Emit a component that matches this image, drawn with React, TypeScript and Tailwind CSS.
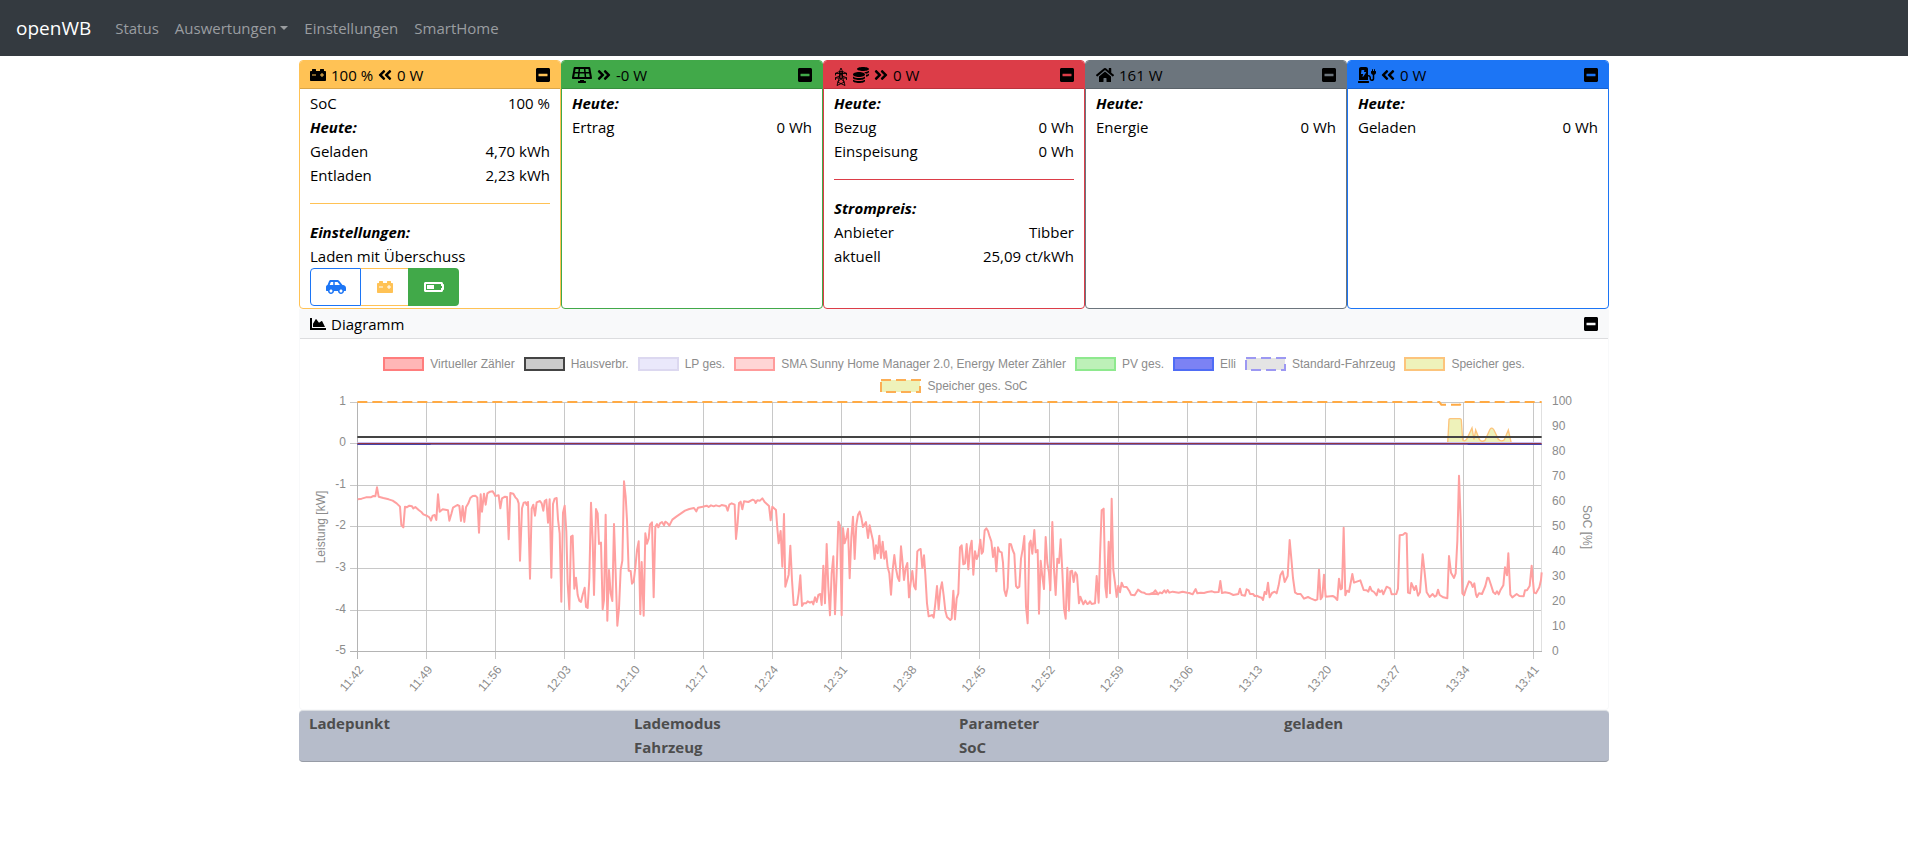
import type { ReactNode } from "react";
import {
  FaAngleDoubleLeft,
  FaAngleDoubleRight,
  FaBatteryHalf,
  FaCarBattery,
  FaCarSide,
  FaChargingStation,
  FaChartArea,
  FaCoins,
  FaHome,
  FaMinusSquare,
  FaSolarPanel,
} from "react-icons/fa";

const FONT = "font-['Segoe_UI','Open_Sans',sans-serif]";

function PylonIcon() {
  return (
    <svg width="14" height="22" viewBox="0 0 14 22" fill="none" stroke="currentColor" strokeWidth="0.9" aria-hidden="true">
      <path d="M5.5 7.500 7 4l1.500 3.500M1 9.500 5.500 7.500h3L13 9.500H1M1.500 9.500v2M12.500 9.500v2M5.500 7.500l3 4.500M8.500 7.500l-3 4.500" />
      <path d="M1 14 5.500 12h3L13 14H1M1.500 14v2M12.500 14v2M5.500 7.500V13L3 21.500M8.500 7.500V13L11 21.500M5.500 13.500l5 4.500M8.500 13.500l-5 4.500M3.500 18l7.500 3.500M10.500 18 3 21.500" />
    </svg>
  );
}

type CardProps = {
  title: ReactNode;
  border: string;
  fill: string;
  children: ReactNode;
};

function Card({ title, border, fill, children }: CardProps) {
  return (
    <section className={`flex min-w-0 flex-1 flex-col overflow-hidden rounded border ${border}`}>
      <header className={`flex h-7 items-center border-b border-black/15 px-2.5 ${fill}`}>
        <h2 className="flex items-center gap-[5px]">{title}</h2>
        <button type="button" aria-label="Einklappen" className="ml-auto">
          <FaMinusSquare className="h-4 w-3.5" />
        </button>
      </header>
      <div className="flex-1 px-2.5 pt-0.5 pb-0.5">{children}</div>
    </section>
  );
}

function Row({ label, value }: { label: string; value: string }) {
  return (
    <div className="flex justify-between">
      <span>{label}</span>
      <span>{value}</span>
    </div>
  );
}

function Heading({ children }: { children: ReactNode }) {
  return <h3 className="font-bold italic">{children}</h3>;
}

const NAV = ["Status", "Auswertungen", "Einstellungen", "SmartHome"];

const LEGEND = [
  { label: "Virtueller Zähler", stroke: "#ff7d7d", fill: "#ffb6b6" },
  { label: "Hausverbr.", stroke: "#444444", fill: "#cccccc" },
  { label: "LP ges.", stroke: "#dcd8f0", fill: "#eae8fb" },
  { label: "SMA Sunny Home Manager 2.0, Energy Meter Zähler", stroke: "#ff9b9b", fill: "#ffd5d5" },
  { label: "PV ges.", stroke: "#8ee98e", fill: "#bdf0b8" },
  { label: "Elli", stroke: "#4f6cf5", fill: "#7c82f4" },
  { label: "Standard-Fahrzeug", stroke: "#9c98f2", fill: "#e4e4e4", dashed: true },
  { label: "Speicher ges.", stroke: "#fcc47c", fill: "#eef2ba" },
  { label: "Speicher ges. SoC", stroke: "#fcae54", fill: "#eef2ba", dashed: true },
];

const TIMES = [
  "11:42", "11:49", "11:56", "12:03", "12:10", "12:17", "12:24", "12:31", "12:38",
  "12:45", "12:52", "12:59", "13:06", "13:13", "13:20", "13:27", "13:34", "13:41",
];

// y of the grid lines, 1 kW down to -5 kW
const GRID_Y = [9.5, 50.5, 92.5, 133.5, 175.5, 217.5, 258.5];

// meter samples, three units per pixel; each run starts at its own x offset
const METER_RUNS = [
  {
    start: 0,
    points:
      "203,478 215,476 228,472 242,472 250,468 256,469 261,442 266,470 280,474 296,478 308,482 320,490 330,500 334,555 340,562 345,500 350,502 358,497 366,499 370,505 376,501 386,510 394,516 400,523 412,528 418,532 423,542 428,527 434,525 439,540 444,463 449,515 458,508 474,511 478,542 484,522 489,503 502,495 508,498 513,543 518,498 523,546 528,502 535,490 541,474 548,468 556,467 562,473 567,578 572,463 576,515 582,461 587,494 592,460 600,455 608,454 612,460 616,468 626,466 631,505 636,475 645,470 651,471 656,598 661,459 670,461 676,472 682,478 686,490 690,662 696,505 701,488 707,487 710,495 714,486 720,716 725,506 730,494 735,527 740,487 750,483 755,490 760,512 764,483 769,479 774,548 779,478 784,713 789,492 794,476 800,474 804,538 809,580 814,785 819,518 824,497 829,575 833,730 838,808 843,590 848,587 853,746 858,713 863,765 868,782 873,786 878,764 884,743 888,801 893,804 898,715 903,488 908,600 912,765 918,507 923,520 927,612 933,608 938,808 942,780 947,524 952,842 957,690 962,760 967,783 972,552 977,700 982,857 987,805 992,690 997,662 1002,424 1007,470 1011,540 1016,692 1022,693 1026,731 1031,725 1036,682 1041,630 1046,604 1051,823 1055,666 1061,827 1066,580 1071,611 1076,595 1080,554 1086,547 1091,772 1096,560 1101,552 1105,562 1110,550 1116,546 1122,556 1126,545 1132,549 1138,557 1147,539 1160,529 1172,521",
  },
  {
    start: 1170,
    points:
      "2,521 15,512 28,507 42,504 49,514 54,503 68,500 80,497 86,501 93,496 101,499 108,496 118,499 125,495 138,498 143,512 148,494 155,490 164,494 168,597 173,548 177,489 182,485 187,508 192,484 205,486 218,479 224,482 227,489 232,481 240,482 247,475 254,486 267,498 272,541 277,500 288,510 292,565 296,610 302,573 307,680 312,522 316,740 326,704 331,617 336,720 341,795 351,794 356,760 361,706 366,798 371,790 378,790 383,784 390,788 396,785 400,793 405,772 410,786 415,765 421,762 425,795 430,677 435,790 440,612 445,740 450,826 455,700 460,649 465,823 470,700 475,545 480,556 485,826 489,564 494,610 499,593 504,566 509,715 514,592 519,530 524,657 529,555 534,524 539,515 544,533 549,561 558,546 564,594 569,556 574,580 579,602 584,657 588,616 593,640 598,587 603,654 608,605 613,656 618,634 623,682 628,700 633,764 638,690 643,645 648,686 653,712 658,723 663,619 667,660 672,720 677,684 682,669 687,772 692,729 697,693 702,738 707,748 712,634 717,629 722,627 727,684 732,646 736,704 741,790 746,829 757,825 761,833 766,790 771,738 776,808 781,750 786,727 791,766 796,812 801,831 811,840 815,836 820,752 825,838 830,775 835,760 840,622 845,616 850,673 855,670 860,612 865,688 870,626 875,602 880,704 885,634 890,657 895,645 901,599 905,641 909,635 914,571 919,565 924,573 929,590 934,604 939,651 944,623 949,694 954,622 959,635 965,637 969,668 973,750 978,768 983,743 988,612 993,613 998,630 1003,642 1008,738 1013,744 1018,740 1023,656 1028,628 1033,588 1038,800 1043,850 1048,610 1052,602 1057,641 1063,570 1067,637 1073,630 1077,821 1082,662 1087,708 1092,747 1097,591 1102,669 1107,698 1111,751 1117,546 1122,688 1127,765 1132,656 1137,669 1142,598 1147,694 1152,806 1157,836 1162,683 1167,812 1171,694 1176,692 1181,726 1186,697 1191,705 1197,790 1201,770 1210,793 1216,782 1222,792 1226,790 1230,784 1235,792 1245,790 1250,708 1256,788 1260,648 1265,511 1271,506 1276,740 1280,772 1286,605 1290,760 1295,476 1300,690 1305,728 1310,771 1315,737 1320,757 1325,728 1330,740 1340,741 1348,753 1353,764 1364,766 1374,749 1385,757 1392,758 1398,762 1408,763 1418,761 1426,751 1434,762",
  },
  {
    start: 2580,
    points:
      "0,762 10,758 16,752 24,763 30,757 36,760 43,751 48,758 53,750 58,758 68,755 86,758 98,755 112,758 118,759 128,763 137,747 142,760 152,758 162,759 172,756 186,754 194,757 206,756 211,723 216,759 225,757 240,760 250,765 265,762 270,746 275,765 285,767 290,748 296,751 300,762 309,762 314,768 320,767 328,771 335,773 339,780 344,756 349,762 354,728 359,772 366,759 374,755 380,760 386,736 391,706 398,694 404,726 413,708 419,600 424,656 429,714 435,757 442,762 452,762 462,776 474,771 482,775 496,781 502,778 507,689 512,778 517,770 522,704 527,770 548,768 554,771 562,780 567,716 572,748 576,745 581,563 586,766 591,752 597,756 607,702 612,728 631,721 641,750 650,751 655,755 660,740 665,752 672,756 680,766 685,748 690,756 696,751 700,763 710,740 720,745 725,763 739,762 744,746 749,586 759,584 765,579 770,581 774,758 780,760 784,729 793,750 798,738 804,767 810,757 818,643 824,698 830,757 839,771 848,762 854,770 859,767 864,749 869,765 880,772 892,775 897,648 903,698 912,714 917,700 922,603 927,407 932,540 937,760 942,766 948,747 957,724 963,728 968,741 973,730 978,764 981,771 987,760 996,762 1006,738 1012,713 1016,714 1023,735 1030,757 1036,762 1041,754 1046,763 1052,749 1060,736 1065,682 1071,706 1075,640 1081,764 1087,772 1100,762 1108,768 1121,769 1125,751 1131,751 1139,738 1145,677 1152,758 1158,760 1168,742 1173,720 1175,697",
  },
];

const METER_POINTS = METER_RUNS.flatMap(({ start, points }) =>
  points.split(" ").map((pair) => {
    const [x, y] = pair.split(",").map(Number);
    return `${start + x},${y}`;
  }),
).join(" ");

function Chart() {
  return (
    <svg viewBox="0 0 1308 316" className="block h-auto w-full font-['Liberation_Sans',Arial,sans-serif] text-[12px]" fill="#8c8c8c">
      <g stroke="#c8c8c8">
        {GRID_Y.map((y) => (
          <line key={y} x1="50" x2="1242" y1={y} y2={y} />
        ))}
        {TIMES.map((t, i) => {
          const x = 57.5 + Math.round(i * 69.15);
          return <line key={t} x1={x} x2={x} y1="9" y2="266" />;
        })}
        <line x1="1241.5" x2="1241.5" y1="9" y2="258" stroke="#e0e0e0" />
        <path d="M57.5 9v257M50 258.500h1192" stroke="#b4b4b4" />
      </g>

      <g transform="translate(-10 -53) scale(0.333333)">
        <path
          d="M3473 310 3477 238Q3478 236 3481 236H3510Q3513 236 3514 240L3518 300Q3522 306 3530 298L3546 264 3552 298 3557 270 3568 298Q3575 308 3585 301L3600 268Q3606 260 3612 270L3625 298Q3634 307 3643 299L3655 270 3664 310Z"
          fill="#eef2ba"
          stroke="#fcc47c"
          strokeWidth="4"
        />
        <path d="M202 291H3755" stroke="#444444" strokeWidth="6" />
        <path d="M202 307.500H3755" stroke="#c6c0f5" strokeWidth="3" />
        <path d="M202 310.500H3755" stroke="#93333f" strokeWidth="3" />
        <path d="M202 313.500H3755" stroke="#7667b4" strokeWidth="3" />
        <path d="M202 313.500H422M3533 313.500H3755" stroke="#4545ac" strokeWidth="3" />
        <path
          d="M202 186H3448L3454 194H3510L3516 186H3755"
          fill="none"
          stroke="#ffaa44"
          strokeWidth="6"
          strokeDasharray="30 15"
        />
        <polyline points={METER_POINTS} fill="none" stroke="#ffa0a0" strokeWidth="6" strokeLinejoin="round" />
      </g>

      <g textAnchor="end">
        {GRID_Y.map((y, i) => (
          <text key={y} x="46" y={y + 2}>
            {1 - i}
          </text>
        ))}
        {TIMES.map((t, i) => (
          <text key={t} transform={`translate(${64 + i * 69.15} 277) rotate(-50)`}>
            {t}
          </text>
        ))}
      </g>
      {Array.from({ length: 11 }, (_, i) => (
        <text key={i} x="1252" y={12 + i * 25}>
          {100 - i * 10}
        </text>
      ))}
      <g textAnchor="middle">
        <text transform="translate(25 134) rotate(-90)">Leistung [kW]</text>
        <text transform="translate(1283 134) rotate(90)">SoC [%]</text>
      </g>
    </svg>
  );
}

export default function App() {
  return (
    <div className={`text-[15px] leading-6 text-black ${FONT}`}>
      <nav className="flex h-14 items-center bg-[#343a40] px-4">
        <a href="#" className="mr-4 text-[19px] text-white">
          openWB
        </a>
        <div className="flex">
          {NAV.map((item) => (
            <a key={item} href="#" className="flex items-center px-2 text-[#9a9da0]">
              {item}
              {item === "Auswertungen" && (
                <span className="ml-1 border-x-4 border-t-4 border-x-transparent border-t-current" />
              )}
            </a>
          ))}
        </div>
      </nav>

      <main className="mx-auto mt-1 max-w-[1310px]">
        <div className="flex">
          <Card
            border="border-[#ffc255]"
            fill="bg-[#ffc255]"
            title={
              <>
                <FaCarBattery size={16} /> 100 % <FaAngleDoubleLeft className="h-4 w-3.5" /> 0 W
              </>
            }
          >
            <Row label="SoC" value="100 %" />
            <Heading>Heute:</Heading>
            <Row label="Geladen" value="4,70 kWh" />
            <Row label="Entladen" value="2,23 kWh" />
            <hr className="my-4 border-[#ffc255]" />
            <Heading>Einstellungen:</Heading>
            <p>Laden mit Überschuss</p>
            <div className="flex">
              <button type="button" aria-label="Fahrzeug" className="flex h-[38px] w-[51px] items-center justify-center rounded-l border border-[#1c75f5] text-[#1c75f5]">
                <FaCarSide size={20} />
              </button>
              <button type="button" aria-label="Speicher" className="flex h-[38px] w-[47px] items-center justify-center border-y border-[#ffc255] text-[#ffc255]">
                <FaCarBattery size={16} />
              </button>
              <button type="button" aria-label="Überschuss" className="flex h-[38px] w-[51px] items-center justify-center rounded-r bg-[#41a949] text-white">
                <FaBatteryHalf size={20} />
              </button>
            </div>
          </Card>

          <Card
            border="border-[#41a949]"
            fill="bg-[#41a949]"
            title={
              <>
                <FaSolarPanel size={20} /> <FaAngleDoubleRight className="h-4 w-3.5" /> -0 W
              </>
            }
          >
            <Heading>Heute:</Heading>
            <Row label="Ertrag" value="0 Wh" />
          </Card>

          <Card
            border="border-[#dc3d48]"
            fill="bg-[#dc3d48]"
            title={
              <>
                <PylonIcon /> <FaCoins size={16} /> <FaAngleDoubleRight className="h-4 w-3.5" /> 0 W
              </>
            }
          >
            <Heading>Heute:</Heading>
            <Row label="Bezug" value="0 Wh" />
            <Row label="Einspeisung" value="0 Wh" />
            <hr className="my-4 border-[#dc3d48]" />
            <Heading>Strompreis:</Heading>
            <Row label="Anbieter" value="Tibber" />
            <Row label="aktuell" value="25,09 ct/kWh" />
          </Card>

          <Card
            border="border-[#6c757d]"
            fill="bg-[#6c757d]"
            title={
              <>
                <FaHome size={18} /> 161 W
              </>
            }
          >
            <Heading>Heute:</Heading>
            <Row label="Energie" value="0 Wh" />
          </Card>

          <Card
            border="border-[#1c75f5]"
            fill="bg-[#1c75f5]"
            title={
              <>
                <FaChargingStation size={18} /> <FaAngleDoubleLeft className="h-4 w-3.5" /> 0 W
              </>
            }
          >
            <Heading>Heute:</Heading>
            <Row label="Geladen" value="0 Wh" />
          </Card>
        </div>

        <section className="rounded-b border border-t-0 border-[#f8f9fa]">
          <header className="flex h-[30px] items-center border-b border-[#dcdddf] bg-[#f8f9fa] px-2.5">
            <h2 className="flex items-center gap-[5px]">
              <FaChartArea size={16} /> Diagramm
            </h2>
            <button type="button" aria-label="Diagramm einklappen" className="ml-auto">
              <FaMinusSquare className="h-4 w-3.5" />
            </button>
          </header>
          <div className="flex flex-wrap justify-center gap-x-[9px] gap-y-2 px-12 pt-[18px] font-['Liberation_Sans',Arial,sans-serif] text-[12px] leading-[14px] text-[#8c8c8c]">
            {LEGEND.map(({ label, stroke, fill, dashed }) => (
              <button key={label} type="button" className="flex items-center gap-1.5">
                <svg width="41" height="14" aria-hidden="true">
                  <rect
                    x="1"
                    y="1"
                    width="39"
                    height="12"
                    fill={fill}
                    stroke={stroke}
                    strokeWidth="2"
                    strokeDasharray={dashed ? "10 5" : undefined}
                  />
                </svg>
                {label}
              </button>
            ))}
          </div>
          <Chart />
        </section>

        <section className="grid grid-cols-4 rounded border-y border-t-[#dcdfe3] border-b-[#979ca6] bg-[#b6bcca] pb-0.5 pl-2.5 font-bold text-[#4d4d4d]">
          <span>Ladepunkt</span>
          <span>Lademodus</span>
          <span>Parameter</span>
          <span>geladen</span>
          <span className="col-start-2">Fahrzeug</span>
          <span>SoC</span>
        </section>
      </main>
    </div>
  );
}
